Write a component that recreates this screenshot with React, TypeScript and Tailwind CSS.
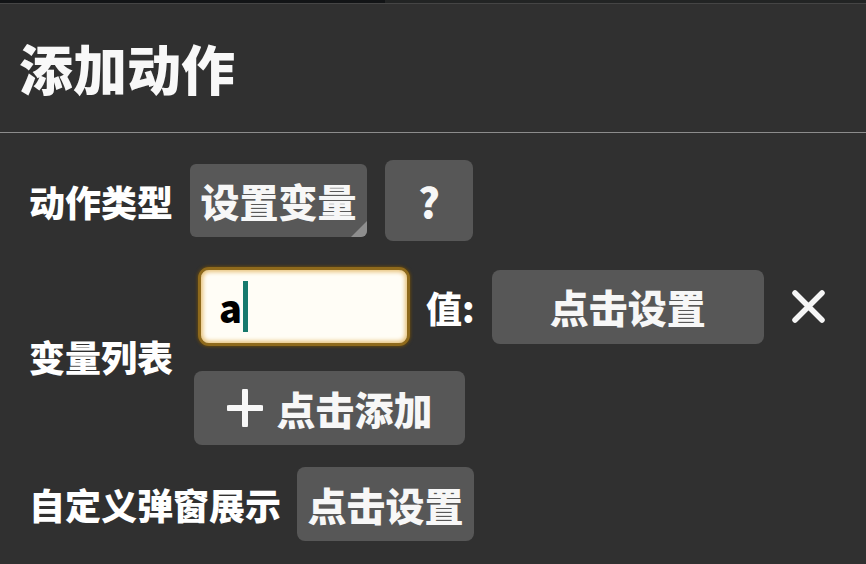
const font = { fontFamily: '"Noto Sans CJK SC", "Noto Sans", sans-serif' };

const GrayButton = ({ label, className = "" }: { label: string; className?: string }) => (
  <div
    className={`flex items-center justify-center rounded-lg bg-[#575757] text-[39px] font-black leading-none text-[#f7f7f7] ${className}`}
  >
    {label}
  </div>
);

export default function App() {
  return (
    <div className="w-[866px] h-[564px] overflow-hidden bg-[#303030] text-white" style={font}>
      {/* status strip */}
      <div className="flex h-[3px]">
        <div className="w-[385px] bg-[#121416]" />
        <div className="flex-1 bg-[#222424]" />
      </div>
      <div className="h-px bg-[#454545]" />

      {/* header */}
      <div className="flex h-[129px] items-center border-b border-[#8c8c8c] pl-[19px]">
        <h1 className="text-[54px] font-black leading-none text-[#f8f8f8]">添加动作</h1>
      </div>

      <div className="pl-[29px] pt-[27px]">
        {/* 动作类型 */}
        <div className="flex items-center">
          <span className="text-[36px] font-black leading-none">动作类型</span>
          <div className="relative ml-[17px] h-[73px] w-[177px] overflow-hidden rounded-md bg-[#585858]">
            <div className="flex h-full items-center justify-center text-[39px] font-black leading-none text-[#f7f7f7]">
              设置变量
            </div>
            <div className="absolute bottom-0 right-0 h-[16px] w-[16px] bg-[#8e8e8e] [clip-path:polygon(100%_0,100%_100%,0_100%)]" />
          </div>
          <GrayButton label="?" className="ml-[18px] h-[81px] w-[88px] !text-[41px]" />
        </div>

        {/* 变量列表 */}
        <div className="mt-[26px] flex items-center">
          <span className="text-[36px] font-black leading-none">变量列表</span>
          <div className="ml-[21px] flex flex-col">
            <div className="flex items-center">
              <div className="ml-[4px] flex h-[79px] w-[212px] items-center rounded-[11px] border-[3px] border-[#8f6a1c] bg-[#fffdf6] pl-[18px] shadow-[inset_0_0_4px_2px_#e8c27a,0_0_3px_1px_#5e4512]">
                <span className="text-[38px] font-black leading-none text-black">a</span>
                <span className="ml-[1px] h-[51px] w-[5px] bg-[#16796c]" />
              </div>
              <span className="ml-[16px] text-[36px] font-black leading-none">值:</span>
              <GrayButton label="点击设置" className="ml-[17px] h-[74px] w-[272px]" />
              <svg width="35" height="35" viewBox="0 0 35 35" className="ml-[27px] shrink-0">
                <path d="M4 4l27 27M31 4L4 31" stroke="#f5f5f5" strokeWidth="5.5" strokeLinecap="round" />
              </svg>
            </div>
            <div className="mt-[25px] flex h-[74px] w-[271px] items-center justify-center gap-[14px] rounded-lg bg-[#575757] text-[39px] font-black leading-none text-[#f7f7f7]">
              <svg width="36" height="38" viewBox="0 0 36 38" className="shrink-0">
                <path d="M18 2v34M2 19h32" stroke="#f7f7f7" strokeWidth="6" strokeLinecap="round" />
              </svg>
              <span>点击添加</span>
            </div>
          </div>
        </div>

        {/* 自定义弹窗展示 */}
        <div className="mt-[22px] flex items-center">
          <span className="text-[36px] font-black leading-none">自定义弹窗展示</span>
          <GrayButton label="点击设置" className="ml-[16px] h-[74px] w-[177px]" />
        </div>
      </div>
    </div>
  );
}
